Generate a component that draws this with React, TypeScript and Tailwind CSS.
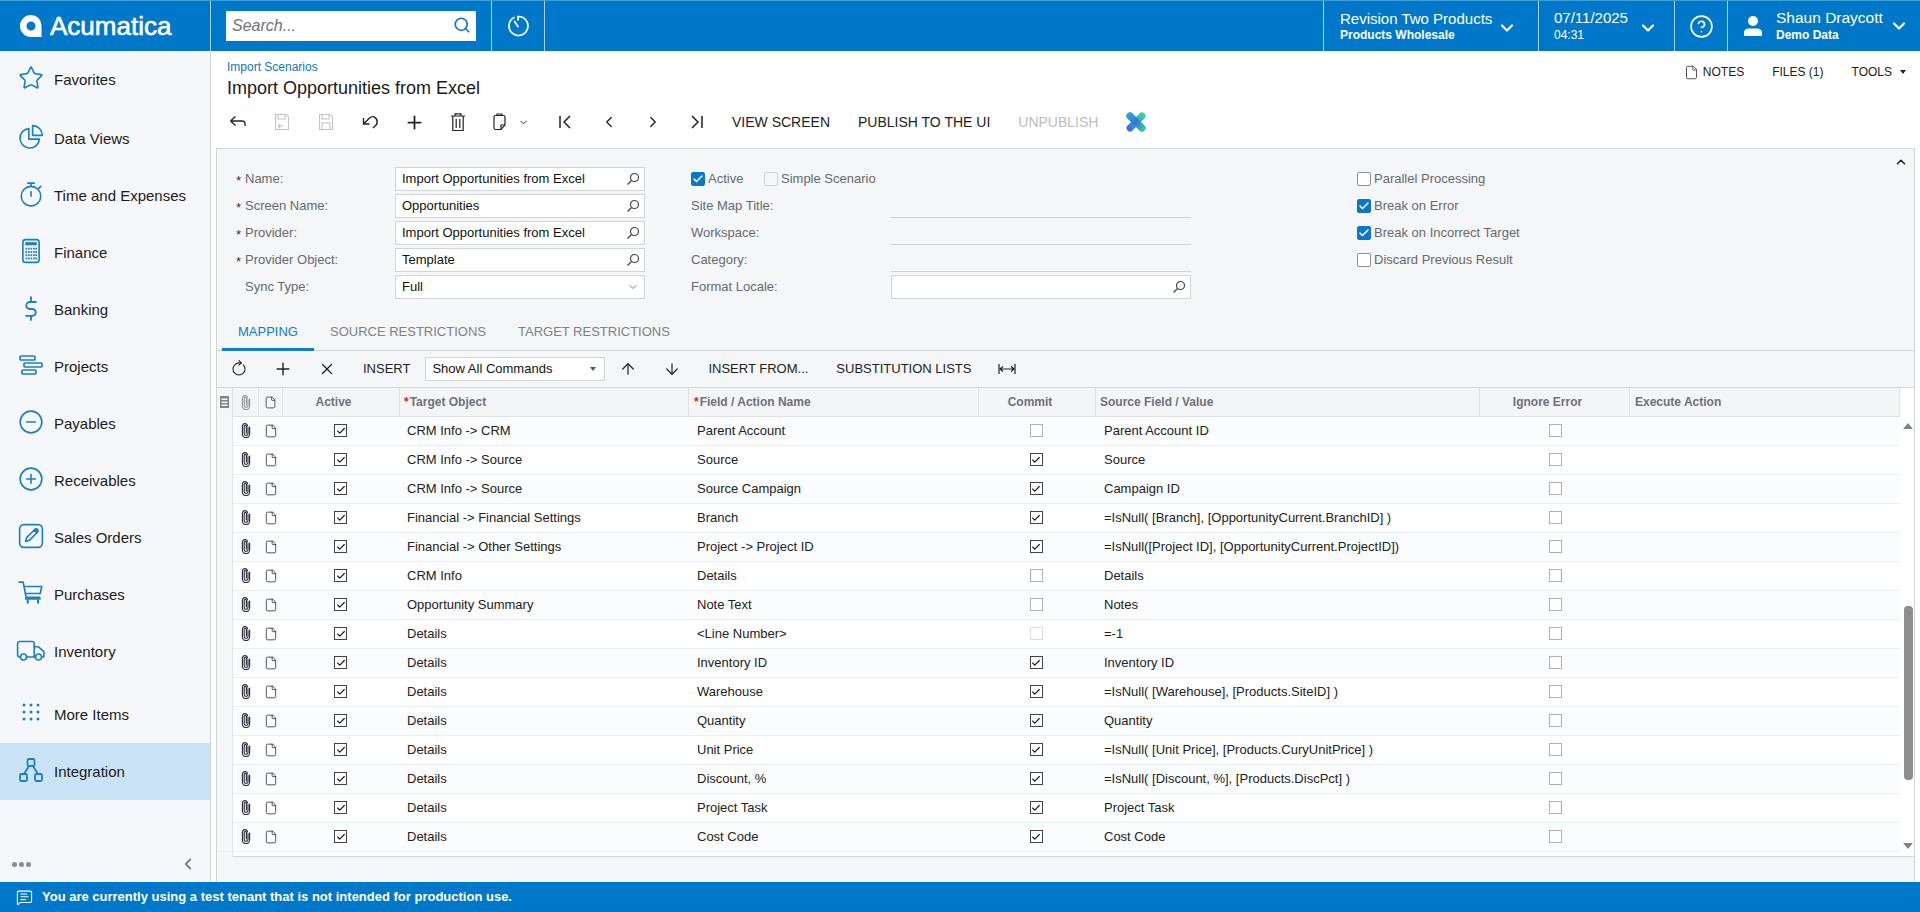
import React from 'react';
import {
  Star, CircleMinus, CirclePlus,
  Search, ChevronDown, ChevronUp, ChevronLeft, ChevronRight, CircleHelp, File, Plus, X,
  ArrowUp, ArrowDown, RotateCw, Check, MessageSquareText,
} from 'lucide-react';

const NavIconClass = 'text-[#1b7fc4]';

const NavSvg = ({ children, w = 26, vb = '0 0 24 24', sw = 1.5 }: { children: React.ReactNode; w?: number; vb?: string; sw?: number }) => (
  <svg width={w} height="26" viewBox={vb} fill="none" stroke="#1b7fc4" strokeWidth={sw} strokeLinecap="round" strokeLinejoin="round">
    {children}
  </svg>
);

const PieIcon = () => (
  <NavSvg>
    <path d="M10 4.2 A9 9 0 1 0 19.8 14 H10 Z" />
    <path d="M13.5 1.5 A9 9 0 0 1 22.5 10.5 H13.5 Z" />
  </NavSvg>
);

const StopwatchIcon = () => (
  <NavSvg>
    <circle cx="12" cy="14" r="9" />
    <path d="M9 2 H15 M12 2 V5 M12 10 V14 M19 7 L21 5" />
  </NavSvg>
);

const CalcIcon = () => (
  <NavSvg>
    <rect x="4.5" y="1.5" width="15" height="21" rx="2.5" />
    <rect x="7" y="4" width="10" height="2.5" fill="#1b7fc4" strokeWidth="0.5" />
    <g fill="#1b7fc4" stroke="none">
      {[9, 12, 15, 18].flatMap((y) => [7, 9.3, 11.6, 14, 16].map((x) => <rect key={`${x}-${y}`} x={x} y={y} width="1.5" height="1.7" />))}
    </g>
  </NavSvg>
);

const BankIcon = () => (
  <NavSvg sw={1.7}>
    <path d="M16.5 6.5 H10.8 a3.2 3.2 0 0 0 0 6.4 H13.2 a3.2 3.2 0 0 1 0 6.4 H7.5 M12 2 V5 M12 20 V23" />
  </NavSvg>
);

const GanttIcon = () => (
  <svg width="26" height="24" viewBox="0 0 26 24" fill="none" stroke="#1b7fc4" strokeWidth="1.7">
    <rect x="2" y="3" width="15" height="4" rx="1" />
    <rect x="6" y="10" width="18" height="4" rx="1" />
    <rect x="4" y="17" width="14" height="4" rx="1" />
  </svg>
);

const PenIcon = () => (
  <NavSvg>
    <rect x="1.5" y="1.5" width="21" height="21" rx="4" />
    <path d="M7 17 L8 13.5 L15 6.5 L17.5 9 L10.5 16 Z" />
    <path d="M15 6.5 Q16.5 4.8 18 6 Q19.2 7.5 17.5 9 Z" fill="#1b7fc4" />
  </NavSvg>
);

const CartIcon = () => (
  <NavSvg>
    <path d="M1 2 H4.8 L7.5 16 H20" />
    <path d="M7.5 17.2 H20" strokeWidth="2.2" />
    <path d="M5.6 6 H22 L20.5 12.5 H6.8" />
    <path d="M9 19 V21 M18.5 19 V21" strokeWidth="2" />
  </NavSvg>
);

const TruckIcon = () => (
  <NavSvg w={30} vb="0 0 28 24">
    <path d="M3.8 18.5 H3.5 A2 2 0 0 1 1.5 16.5 V6 A2 2 0 0 1 3.5 4 H15 A2 2 0 0 1 17 6 V18.5 H10" />
    <path d="M17 9 H21 L26 13.5 V18.5 H24 M17 18.5 H18" />
    <circle cx="7" cy="18.5" r="2.8" />
    <circle cx="21" cy="18.5" r="2.8" />
  </NavSvg>
);

const DotsIcon = () => (
  <svg width="20" height="20" viewBox="0 0 20 20" fill="#1b7fc4">
    {[2, 9, 16].flatMap((y) => [3, 10, 17].map((x) => <circle key={`${x}-${y}`} cx={x} cy={y} r="1.5" />))}
  </svg>
);

const IntegrationIcon = () => (
  <svg width="26" height="26" viewBox="0 0 26 26" fill="none" stroke="#1b7fc4" strokeWidth="1.8">
    <rect x="9.5" y="2" width="7" height="7" rx="1.5" />
    <rect x="2" y="17" width="7" height="7" rx="1.5" />
    <rect x="17" y="17" width="7" height="7" rx="1.5" />
    <path d="M11 9 L6 17 M15 9 L20 17" />
  </svg>
);

const navItems = [
  { label: 'Favorites', icon: <Star size={26} strokeWidth={1.5} className={NavIconClass} /> },
  { label: 'Data Views', icon: <PieIcon />, cls: 'mt-[2px]' },
  { label: 'Time and Expenses', icon: <StopwatchIcon /> },
  { label: 'Finance', icon: <CalcIcon /> },
  { label: 'Banking', icon: <BankIcon /> },
  { label: 'Projects', icon: <GanttIcon /> },
  { label: 'Payables', icon: <CircleMinus size={26} strokeWidth={1.5} className={NavIconClass} /> },
  { label: 'Receivables', icon: <CirclePlus size={26} strokeWidth={1.5} className={NavIconClass} /> },
  { label: 'Sales Orders', icon: <PenIcon /> },
  { label: 'Purchases', icon: <CartIcon /> },
  { label: 'Inventory', icon: <TruckIcon /> },
  { label: 'More Items', icon: <DotsIcon />, cls: 'mt-[6px]' },
  { label: 'Integration', icon: <IntegrationIcon />, active: true },
];

const rows = [
  ['CRM Info -> CRM', 'Parent Account', 0, 'Parent Account ID'],
  ['CRM Info -> Source', 'Source', 1, 'Source'],
  ['CRM Info -> Source', 'Source Campaign', 1, 'Campaign ID'],
  ['Financial -> Financial Settings', 'Branch', 1, '=IsNull( [Branch], [OpportunityCurrent.BranchID] )'],
  ['Financial -> Other Settings', 'Project -> Project ID', 1, '=IsNull([Project ID], [OpportunityCurrent.ProjectID])'],
  ['CRM Info', 'Details', 0, 'Details'],
  ['Opportunity Summary', 'Note Text', 0, 'Notes'],
  ['Details', '<Line Number>', 2, '=-1'],
  ['Details', 'Inventory ID', 1, 'Inventory ID'],
  ['Details', 'Warehouse', 1, '=IsNull( [Warehouse], [Products.SiteID] )'],
  ['Details', 'Quantity', 1, 'Quantity'],
  ['Details', 'Unit Price', 1, '=IsNull( [Unit Price], [Products.CuryUnitPrice] )'],
  ['Details', 'Discount, %', 1, '=IsNull( [Discount, %], [Products.DiscPct] )'],
  ['Details', 'Project Task', 1, 'Project Task'],
  ['Details', 'Cost Code', 1, 'Cost Code'],
] as const;

// form checkbox, blue when on
const FormCheck = ({ on, label, disabled }: { on?: boolean; label: string; disabled?: boolean }) => (
  <div className="flex items-center h-[24px]">
    <span
      className={`w-[14px] h-[14px] rounded-[2px] flex items-center justify-center border ${
        on ? 'bg-[#0a78c8] border-[#0a78c8]' : disabled ? 'border-[#d0d3d6]' : 'border-[#8a8f94] bg-white'
      }`}
    >
      {on && <Check size={12} strokeWidth={3} className="text-white" />}
    </span>
    <span className="ml-[3px] text-[13px] text-[#666a6e]">{label}</span>
  </div>
);

const GridCheck = ({ state }: { state: number }) => (
  <span
    className={`w-[13px] h-[13px] flex items-center justify-center border ${
      state === 1 ? 'border-[#444]' : state === 2 ? 'border-[#ddd]' : 'border-[#b0b0b0]'
    } bg-white`}
  >
    {state === 1 && <Check size={10} strokeWidth={2.6} className="text-[#111]" />}
  </span>
);

const LookupIcon = () => (
  <svg width="14" height="14" viewBox="0 0 14 14" fill="none" stroke="#444" strokeWidth="1.2">
    <circle cx="8.5" cy="5.5" r="4" />
    <path d="M5.5 8.5 L1.5 12.5" />
  </svg>
);

const FormInput = ({ value, w = 'w-[250px]', select }: { value?: string; w?: string; select?: boolean }) => (
  <div className={`${w} h-[24px] bg-white border border-[#d2d5d8] flex items-center justify-between pl-[6px] pr-[4px] text-[13px] text-[#111]`}>
    <span>{value}</span>
    {select ? <ChevronDown size={12} className="text-[#777] mr-[1px]" /> : <LookupIcon />}
  </div>
);

const FormLabel = ({ req, label, w }: { req?: boolean; label: string; w: string }) => (
  <div className={`${w} flex items-center h-[24px] text-[13px] text-[#666a6e]`}>
    {req !== undefined && <span className="w-[9px] text-[13px] text-[#333] pt-[3px]">{req ? '*' : ''}</span>}
    <span>{label}</span>
  </div>
);

const ToolBtn = ({ children, w = 'w-[44px]' }: { children: React.ReactNode; w?: string }) => (
  <div className={`${w} h-full flex items-center justify-center text-[#222]`}>{children}</div>
);

const TextBtn = ({ label, dim, cls = 'text-[13px]' }: { label: string; dim?: boolean; cls?: string }) => (
  <div className={`px-[14px] ${cls} ${dim ? 'text-[#bdbdbd]' : 'text-[#222]'}`}>{label}</div>
);

const BackIcon = () => (
  <svg width="18" height="14" viewBox="0 0 18 14" fill="none" stroke="#222" strokeWidth="1.3">
    <path d="M1.5 6 L6.5 1.5 M1.5 6 L6.5 10.5 M1.5 6 H13 Q16 6 16 9 V11" />
  </svg>
);

const UndoIcon = () => (
  <svg width="18" height="18" viewBox="0 0 18 18" fill="none" stroke="#222" strokeWidth="1.4">
    <path d="M2.5 5 V11 H8.5 M2.5 11 L8.5 5 Q10.5 3.2 13 3.8 A5.5 5.5 0 0 1 13.5 13.5 L12 15" />
  </svg>
);

const TrashIcon = () => (
  <svg width="16" height="20" viewBox="0 0 16 20" fill="none" stroke="#222" strokeWidth="1.2">
    <path d="M1 4 H15 M5 4 V1.8 H11 V4 M2.8 4 V18.5 H13.2 V4 M6.2 7 V16 M9.8 7 V16" />
  </svg>
);

const SaveIcon = ({ back }: { back?: boolean }) => (
  <svg width="16" height="18" viewBox="0 0 16 18" fill="none" stroke="#c4c4c4" strokeWidth="1.1">
    <path d="M1.5 1.5 H12 L14.5 4 V16.5 H1.5 Z" />
    <path d="M4 1.5 V6 H11 V1.5" />
    {back ? <path d="M4 13 H9 M4 13 L6 11 M4 13 L6 15" /> : <rect x="4" y="10" width="8" height="6.5" />}
  </svg>
);

const PasteIcon = () => (
  <svg width="15" height="18" viewBox="0 0 15 18" fill="none" stroke="#222" strokeWidth="1.2">
    <path d="M2 4 Q2 2.5 3.5 2.5 H11.5 Q13 2.5 13 4 V12 L9 16.5 H3.5 Q2 16.5 2 15 Z" />
    <path d="M5 2.5 V1 H10 V2.5" />
    <path d="M13 12 H9 V16.5" />
  </svg>
);

const FirstIcon = () => (
  <svg width="14" height="14" viewBox="0 0 14 14" fill="none" stroke="#222" strokeWidth="1.5">
    <path d="M2 1 V13 M12 1 L6 7 L12 13" />
  </svg>
);

const LastIcon = () => (
  <svg width="14" height="14" viewBox="0 0 14 14" fill="none" stroke="#222" strokeWidth="1.5">
    <path d="M12 1 V13 M2 1 L8 7 L2 13" />
  </svg>
);

const ClearXIcon = () => (
  <svg width="22" height="22" viewBox="0 0 22 22">
    <defs>
      <linearGradient id="xa" gradientUnits="userSpaceOnUse" x1="4" y1="4" x2="18" y2="18">
        <stop offset="0" stopColor="#2f9fe0" />
        <stop offset="0.5" stopColor="#3a63dc" />
        <stop offset="1" stopColor="#2fd0b0" />
      </linearGradient>
      <linearGradient id="xb" gradientUnits="userSpaceOnUse" x1="18" y1="4" x2="4" y2="18">
        <stop offset="0" stopColor="#35d4a4" />
        <stop offset="0.5" stopColor="#2fa8c8" />
        <stop offset="1" stopColor="#3a6ee8" />
      </linearGradient>
    </defs>
    <path d="M5 5 L17 17" stroke="url(#xb)" strokeWidth="7" strokeLinecap="round" />
    <path d="M17 5 L5 17" stroke="url(#xb)" strokeWidth="7" strokeLinecap="round" />
    <path d="M5 5 L17 17" stroke="url(#xa)" strokeWidth="7" strokeLinecap="round" opacity="0.75" />
  </svg>
);

const Clip = ({ color = '#334' }: { color?: string }) => (
  <svg width="10" height="15" viewBox="0 0 10 15" fill="none" stroke={color} strokeWidth="1.2" strokeLinecap="round">
    <path d="M7 4.5 V10.5 A1.9 1.9 0 0 1 3.2 10.5 V3.5 A1.1 1.1 0 0 1 5.4 3.5 V10" />
    <path d="M8.6 4 V11 A3.6 3.6 0 0 1 1.4 11 V3.5 A2.6 2.6 0 0 1 6.6 3" />
  </svg>
);

const Logo = () => (
  <svg width="22" height="26" viewBox="0 0 22 26">
    <path
      fillRule="evenodd"
      fill="#fff"
      d="M11 2 A10.5 10.5 0 0 1 21.5 12.5 V24 H11 A11 11 0 0 1 11 2 Z M11 8.5 A4.5 4.5 0 1 0 11 17.5 A4.5 4.5 0 1 0 11 8.5 Z"
    />
  </svg>
);

const Sidebar = () => (
  <aside className="w-[211px] shrink-0 bg-[#f5f7fb] border-r border-[#d0d4d8] flex flex-col">
    <div className="flex-1">
      {navItems.map((n) => (
        <div key={n.label} className={`h-[57px] flex items-center ${n.cls ?? ''} ${n.active ? 'bg-[#cbe3f6]' : ''}`}>
          <div className="w-[54px] pl-[8px] pb-[4px] flex justify-center shrink-0">{n.icon}</div>
          <span className="pt-[2px] text-[15px] text-[#1c1c1c]">{n.label}</span>
        </div>
      ))}
    </div>
    <div className="h-[36px] flex items-center justify-between pl-[12px] pr-[13px]">
      <div className="flex gap-[2px]">
        <span className="w-[5px] h-[5px] rounded-full bg-[#8a8f94]" />
        <span className="w-[5px] h-[5px] rounded-full bg-[#8a8f94]" />
        <span className="w-[5px] h-[5px] rounded-full bg-[#8a8f94]" />
      </div>
      <ChevronLeft size={18} strokeWidth={2.4} className="text-[#7a7f84]" />
    </div>
  </aside>
);

const Header = () => (
  <header className="h-[51px] shrink-0 bg-[#0078c9] border-t border-[#3fa0dc] flex text-white">
    <div className="w-[211px] shrink-0 border-r border-[#a8d2ee] flex items-center pl-[20px] gap-[8px]">
      <Logo />
      <span className="text-[26px] leading-none [-webkit-text-stroke:0.6px_white]">Acumatica</span>
    </div>
    <div className="w-[281px] shrink-0 border-r border-[#a8d2ee] flex items-center pl-[15px]">
      <div className="w-[250px] h-[30px] bg-white flex items-center justify-between pl-[6px] pr-[5px]">
        <span className="italic text-[#6f7479] text-[16px]">Search...</span>
        <Search size={18} strokeWidth={2.2} className="text-[#0b78c8] mb-[2px]" />
      </div>
    </div>
    <div className="w-[53px] shrink-0 border-r border-[#a8d2ee] flex items-center justify-center">
      <svg width="24" height="24" viewBox="0 0 24 24" fill="none" stroke="#fff" strokeWidth="1.7" strokeLinecap="round">
        <path d="M8 3.6 A9.5 9.5 0 1 0 12 2.5 V6" />
        <path d="M8.5 7.5 L12 12.5" />
      </svg>
    </div>
    <div className="flex-1" />
    <div className="w-[215px] shrink-0 border-l border-[#a8d2ee] flex items-center pl-[16px]">
      <div className="w-[152px] whitespace-nowrap">
        <div className="text-[15px] leading-[17px]">Revision Two Products</div>
        <div className="text-[12px] font-bold leading-[14px] mt-[1px]">Products Wholesale</div>
      </div>
      <ChevronDown size={20} strokeWidth={2.6} className="ml-[5px] mt-[3px]" />
    </div>
    <div className="w-[136px] shrink-0 border-l border-[#a8d2ee] flex items-center pl-[15px]">
      <div className="w-[75px] pb-[2px]">
        <div className="text-[15px] leading-[17px]">07/11/2025</div>
        <div className="text-[12px] leading-[14px] mt-[2px]">04:31</div>
      </div>
      <ChevronDown size={20} strokeWidth={2.6} className="ml-[9px] mt-[3px]" />
    </div>
    <div className="w-[53px] shrink-0 border-l border-[#a8d2ee] flex items-center justify-center">
      <CircleHelp size={25} strokeWidth={1.6} />
    </div>
    <div className="w-[193px] shrink-0 border-l border-[#a8d2ee] flex items-center pl-[15px]">
      <svg width="20" height="22" viewBox="0 0 20 22" fill="#fff">
        <circle cx="10" cy="6" r="5" />
        <path d="M1 21 V18 Q1 13.5 6 13.5 H14 Q19 13.5 19 18 V21 Z" />
      </svg>
      <div className="ml-[13px] w-[107px] whitespace-nowrap pb-[2px]">
        <div className="text-[15.5px] leading-[17px]">Shaun Draycott</div>
        <div className="text-[12px] font-bold leading-[14px] mt-[2px]">Demo Data</div>
      </div>
      <ChevronDown size={20} strokeWidth={2.6} className="ml-[6px]" />
    </div>
  </header>
);

const TitleBlock = () => (
  <div className="h-[49px] flex justify-between pl-[16px] pr-[14px]">
    <div>
      <div className="mt-[9px] h-[15px] leading-[15px] text-[12px] text-[#1177bb]">Import Scenarios</div>
      <div className="mt-[1px] h-[24px] leading-[24px] text-[18px] text-[#1a1a1a]">Import Opportunities from Excel</div>
    </div>
    <div className="mt-[13px] h-[16px] flex items-center text-[12px] text-[#222]">
      <File size={15} strokeWidth={1.2} className="mr-[2px]" />
      <span className="ml-[2px]">NOTES</span>
      <span className="ml-[28px]">FILES (1)</span>
      <span className="ml-[28px]">TOOLS</span>
      <span className="ml-[8px] border-x-[3.5px] border-x-transparent border-t-[4px] border-t-[#222]" />
    </div>
  </div>
);

const MainToolbar = () => (
  <div className="h-[44px] mb-[4px] pl-[5px] flex items-center">
    <ToolBtn><BackIcon /></ToolBtn>
    <ToolBtn><SaveIcon back /></ToolBtn>
    <ToolBtn><SaveIcon /></ToolBtn>
    <ToolBtn><UndoIcon /></ToolBtn>
    <ToolBtn><Plus size={21} strokeWidth={2} /></ToolBtn>
    <ToolBtn><TrashIcon /></ToolBtn>
    <ToolBtn w="w-[63px]">
      <div className="flex items-center pr-[2px] gap-[11px]">
        <PasteIcon />
        <ChevronDown size={11} strokeWidth={2} />
      </div>
    </ToolBtn>
    <ToolBtn><FirstIcon /></ToolBtn>
    <ToolBtn><ChevronLeft size={18} strokeWidth={1.8} /></ToolBtn>
    <ToolBtn><ChevronRight size={18} strokeWidth={1.8} /></ToolBtn>
    <ToolBtn w="w-[43px]"><LastIcon /></ToolBtn>
    <TextBtn label="VIEW SCREEN" cls="text-[14px]" />
    <TextBtn label="PUBLISH TO THE UI" cls="text-[14px]" />
    <TextBtn label="UNPUBLISH" dim cls="text-[14px]" />
    <ToolBtn w="w-[48px]"><ClearXIcon /></ToolBtn>
  </div>
);

const FormArea = () => (
  <div className="h-[163px] pt-[18px] flex relative">
    <div className="pl-[19px] flex flex-col gap-[3px] w-[428px] shrink-0">
      {[
        ['Name:', 'Import Opportunities from Excel'],
        ['Screen Name:', 'Opportunities'],
        ['Provider:', 'Import Opportunities from Excel'],
        ['Provider Object:', 'Template'],
      ].map(([l, v]) => (
        <div key={l} className="flex">
          <FormLabel req label={l} w="w-[159px]" />
          <FormInput value={v} />
        </div>
      ))}
      <div className="flex">
        <FormLabel req={false} label="Sync Type:" w="w-[159px]" />
        <FormInput value="Full" select />
      </div>
    </div>
    <div className="ml-[46px] flex flex-col gap-[3px] w-[500px] shrink-0">
      <div className="flex">
        <div className="w-[73px]"><FormCheck on label="Active" /></div>
        <FormCheck disabled label="Simple Scenario" />
      </div>
      {['Site Map Title:', 'Workspace:', 'Category:'].map((l) => (
        <div key={l} className="flex">
          <FormLabel label={l} w="w-[200px]" />
          <div className="w-[300px] h-[24px] border-b border-[#cfd2d5]" />
        </div>
      ))}
      <div className="flex">
        <FormLabel label="Format Locale:" w="w-[200px]" />
        <FormInput w="w-[300px]" />
      </div>
    </div>
    <div className="ml-[166px] flex flex-col gap-[3px]">
      <FormCheck label="Parallel Processing" />
      <FormCheck on label="Break on Error" />
      <FormCheck on label="Break on Incorrect Target" />
      <FormCheck label="Discard Previous Result" />
    </div>
    <ChevronUp size={14} strokeWidth={2.6} className="absolute right-[6px] top-[6px] text-[#222]" />
  </div>
);

const Tabs = () => (
  <div className="h-[39px] border-b border-[#d3d6d9] pl-[5px] flex text-[13px] text-[#7d8287]">
    <div className="px-[16px] flex items-center pt-[3px] text-[#0f7fc4] border-b-[3px] border-[#0f7fc4] h-[39px]">MAPPING</div>
    <div className="px-[16px] flex items-center pt-[1px]">SOURCE RESTRICTIONS</div>
    <div className="px-[16px] flex items-center pt-[1px]">TARGET RESTRICTIONS</div>
  </div>
);

const GridToolbar = () => (
  <div className="h-[36px] flex items-center">
    <ToolBtn><RotateCw size={16} strokeWidth={1.6} className="-rotate-45" /></ToolBtn>
    <ToolBtn><Plus size={20} strokeWidth={1.7} /></ToolBtn>
    <ToolBtn><X size={18} strokeWidth={1.7} /></ToolBtn>
    <TextBtn label="INSERT" />
    <div className="w-[180px] h-[24px] ml-[1px] mr-[1px] bg-white border border-[#d2d5d8] flex items-center justify-between pl-[6px] pr-[8px] text-[13px] text-[#111]">
      <span>Show All Commands</span>
      <span className="border-x-[3.5px] border-x-transparent border-t-[4px] border-t-[#555]" />
    </div>
    <ToolBtn><ArrowUp size={18} strokeWidth={1.6} /></ToolBtn>
    <ToolBtn><ArrowDown size={18} strokeWidth={1.6} /></ToolBtn>
    <TextBtn label="INSERT FROM..." />
    <TextBtn label="SUBSTITUTION LISTS" />
    <ToolBtn>
      <svg width="18" height="12" viewBox="0 0 18 12" fill="none" stroke="#222" strokeWidth="1.2">
        <path d="M1 1 V11 M17 1 V11 M2 6 H16 M2 6 L5 3.5 M2 6 L5 8.5 M16 6 L13 3.5 M16 6 L13 8.5" />
      </svg>
    </ToolBtn>
  </div>
);

const HeadCell = ({ w, children, cls = '' }: { w: string; children?: React.ReactNode; cls?: string }) => (
  <div className={`${w} shrink-0 h-full border-r border-[#dfe2e5] flex items-center ${cls}`}>{children}</div>
);

const Req = () => <span className="text-[#d22] mr-[1px]">*</span>;

const Grid = () => (
  <div className="h-[470px] bg-white border-y border-[#d3d6d9] flex">
    <div className="w-[1683px] shrink-0 flex flex-col">
      <div className="h-[29px] shrink-0 bg-[#f4f5f7] border-b border-[#dfe2e5] flex text-[12px] font-bold text-[#6d7278]">
        <HeadCell w="w-[16px]" cls="justify-center">
          <svg width="11" height="12" viewBox="0 0 11 12" fill="#7f8489">
            <path d="M1 0 H10 V12 H1 Z M2.5 2.5 V4 H8.5 V2.5 Z M2.5 5.5 V7 H8.5 V5.5 Z M2.5 8.5 V10 H8.5 V8.5 Z" fillRule="evenodd" />
          </svg>
        </HeadCell>
        <HeadCell w="w-[26px]" cls="justify-center"><Clip color="#999" /></HeadCell>
        <HeadCell w="w-[24px]" cls="justify-center"><File size={13} strokeWidth={1.4} className="text-[#333]" /></HeadCell>
        <HeadCell w="w-[117px]" cls="justify-center pr-[15px]">Active</HeadCell>
        <HeadCell w="w-[289px]" cls="pl-[4px]"><Req />Target Object</HeadCell>
        <HeadCell w="w-[290px]" cls="pl-[5px]"><Req />Field / Action Name</HeadCell>
        <HeadCell w="w-[117px]" cls="justify-center pr-[14px]">Commit</HeadCell>
        <HeadCell w="w-[384px]" cls="pl-[4px]">Source Field / Value</HeadCell>
        <HeadCell w="w-[150px]" cls="justify-center pr-[14px]">Ignore Error</HeadCell>
        <HeadCell w="w-[270px]" cls="pl-[5px]">Execute Action</HeadCell>
      </div>
      <div className="flex-1 text-[13px] text-[#222]">
        {rows.map((r, i) => (
          <div key={i} className={`h-[29px] flex items-center pb-[1px] border-b border-[#e8eff5] ${i % 2 === 0 ? 'bg-[#fbfcfe]' : 'bg-white'}`}>
            <div className="w-[16px] h-[29px] shrink-0 bg-[#f6f7f9] border-r border-[#e3e5e8]" />
            <div className="w-[26px] shrink-0 flex justify-center"><Clip /></div>
            <div className="w-[24px] shrink-0 flex justify-center"><File size={14} strokeWidth={1.3} className="text-[#222]" /></div>
            <div className="w-[117px] shrink-0 flex justify-center pr-[2px]"><GridCheck state={1} /></div>
            <div className="w-[289px] shrink-0 pl-[7px]">{r[0]}</div>
            <div className="w-[290px] shrink-0 pl-[8px]">{r[1]}</div>
            <div className="w-[117px] shrink-0 flex justify-center pr-[3px]"><GridCheck state={r[2]} /></div>
            <div className="w-[384px] shrink-0 pl-[8px]">{r[3]}</div>
            <div className="w-[150px] shrink-0 flex justify-center"><GridCheck state={0} /></div>
          </div>
        ))}
        <div className="w-[16px] h-[5px] bg-[#f6f7f9] border-r border-[#e3e5e8]" />
      </div>
    </div>
    <div className="w-[16px] shrink-0 flex flex-col items-center pt-[35px]">
      <span className="border-x-[5px] border-x-transparent border-b-[6px] border-b-[#808488]" />
      <div className="mt-[177px] w-[9px] h-[174px] rounded-[4px] bg-[#8e8e8e]" />
      <span className="mt-[63px] border-x-[5px] border-x-transparent border-t-[6px] border-t-[#808488]" />
    </div>
  </div>
);

export default function App() {
  return (
    <div className="w-[1920px] h-[912px] overflow-hidden flex flex-col bg-white font-['Liberation_Sans',Arial,sans-serif]">
      <Header />
      <div className="flex flex-1 min-h-0">
        <Sidebar />
        <main className="flex-1 min-w-0 flex flex-col">
          <TitleBlock />
          <MainToolbar />
          <div className="flex-1 mx-[5px] bg-[#f4f6f8] border-x border-t border-[#d3d6d9] flex flex-col min-h-0">
            <FormArea />
            <Tabs />
            <GridToolbar />
            <Grid />
          </div>
        </main>
      </div>
      <footer className="h-[30px] shrink-0 bg-[#0078c9] flex items-center pl-[16px] text-white">
        <MessageSquareText size={17} strokeWidth={1.6} />
        <span className="ml-[9px] text-[13px] font-bold">You are currently using a test tenant that is not intended for production use.</span>
      </footer>
    </div>
  );
}
